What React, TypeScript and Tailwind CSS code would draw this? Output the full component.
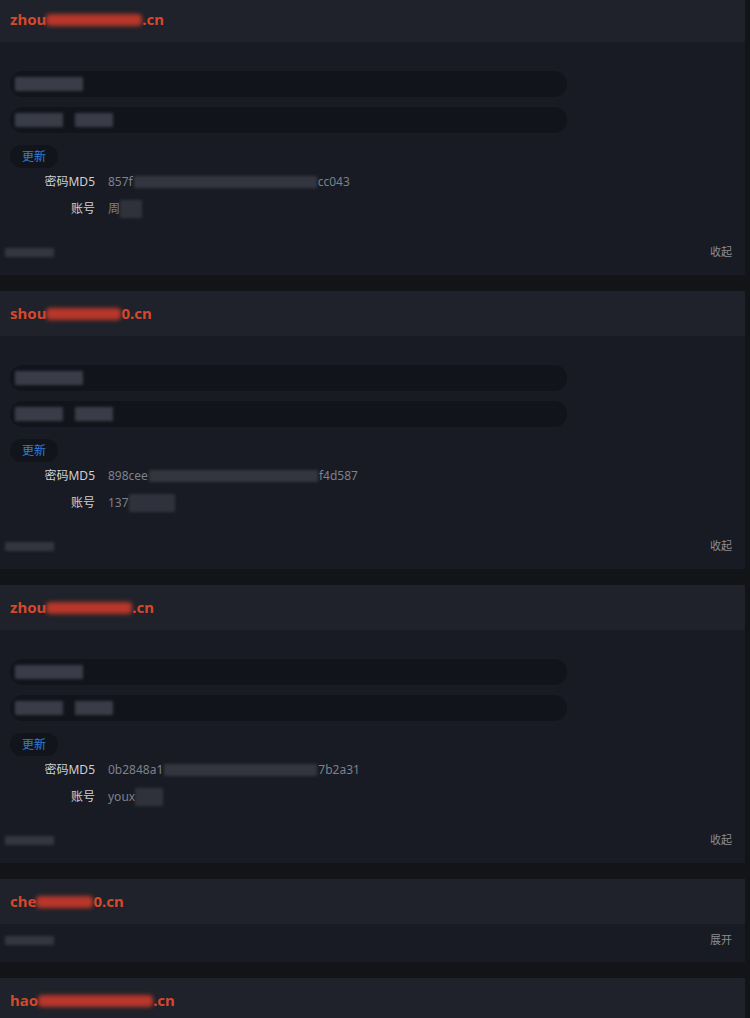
import React from 'react';

interface SiteCard {
  head: string;
  tail: string;
  blurWidth: number;
  expanded: boolean;
  md5Head?: string;
  md5Tail?: string;
  md5Blur?: number;
  account?: string;
  accountBlur?: number;
}

const cards: SiteCard[] = [
  { head: 'zhou', tail: '.cn', blurWidth: 96, expanded: true, md5Head: '857f', md5Tail: 'cc043', md5Blur: 183, account: '周', accountBlur: 22 },
  { head: 'shou', tail: '0.cn', blurWidth: 75, expanded: true, md5Head: '898cee', md5Tail: 'f4d587', md5Blur: 169, account: '137', accountBlur: 46 },
  { head: 'zhou', tail: '.cn', blurWidth: 86, expanded: true, md5Head: '0b2848a1', md5Tail: '7b2a31', md5Blur: 153, account: 'youx', accountBlur: 28 },
  { head: 'che', tail: '0.cn', blurWidth: 57, expanded: false },
  { head: 'hao', tail: '.cn', blurWidth: 115, expanded: false },
];

const Smudge = ({ w, h = 14, className = '' }: { w: number; h?: number; className?: string }) => (
  <span
    className={`inline-block bg-[#3a3d47] blur-[1.5px] align-middle ${className}`}
    style={{ width: w, height: h }}
  />
);

const Card = ({ card }: { card: SiteCard }) => (
  <div className="mb-4 w-[745px]">
    <div className="flex h-[45px] items-center bg-[#1f222a] pl-[10px]">
      <span className="flex items-center text-[15px] font-bold text-[#d6482c]">
        {card.head}
        <span
          className="inline-block h-[12px] rounded-sm bg-[#b8372a] blur-[2px]"
          style={{ width: card.blurWidth }}
        />
        {card.tail}
      </span>
    </div>
    <div className={`bg-[#181b23] ${card.expanded ? 'pb-[13px]' : 'pb-[12px] pt-[6px]'}`}>
      {card.expanded && (
        <div className="pl-[10px] pt-[29px]">
          <div className="flex h-[26px] w-[557px] items-center rounded-full bg-[#11141b] pl-[5px]">
            <Smudge w={68} />
          </div>
          <div className="mt-[10px] flex h-[26px] w-[557px] items-center gap-3 rounded-full bg-[#11141b] pl-[5px]">
            <Smudge w={48} />
            <Smudge w={38} />
          </div>
          <button className="mt-[12px] flex h-[23px] w-[48px] items-center justify-center rounded-full bg-[#11141b] text-[12px] text-[#2f7fd6]">
            更新
          </button>
          <div className="flex h-[27px] items-center text-[12px]">
            <span className="w-[85px] text-right text-[#cfd0d4]">密码MD5</span>
            <span className="ml-[13px] flex items-center text-[#7e818b]">
              {card.md5Head}
              <Smudge w={card.md5Blur ?? 0} h={12} className="mx-[1px] opacity-80" />
              {card.md5Tail}
            </span>
          </div>
          <div className="flex h-[27px] items-center text-[12px]">
            <span className="w-[85px] text-right text-[#cfd0d4]">账号</span>
            <span className="ml-[13px] flex items-center text-[#7e818b]">
              {card.account}
              <Smudge w={card.accountBlur ?? 0} h={18} className="opacity-70" />
            </span>
          </div>
        </div>
      )}
      <div
        className={`flex h-[20px] items-center justify-between pl-[5px] pr-[13px] ${
          card.expanded ? 'mt-[20px]' : ''
        }`}
      >
        <Smudge w={49} h={9} className="opacity-80" />
        <span className="text-[11px] text-[#8b8d95]">{card.expanded ? '收起' : '展开'}</span>
      </div>
    </div>
  </div>
);

export default function App() {
  return (
    <div
      className="h-[1018px] w-[750px] overflow-hidden bg-[#131418]"
      style={{ fontFamily: '"Noto Sans", "Noto Sans CJK SC", sans-serif' }}
    >
      <div className="-mt-[3px]">
        {cards.map((c, i) => (
          <Card key={i} card={c} />
        ))}
      </div>
    </div>
  );
}
